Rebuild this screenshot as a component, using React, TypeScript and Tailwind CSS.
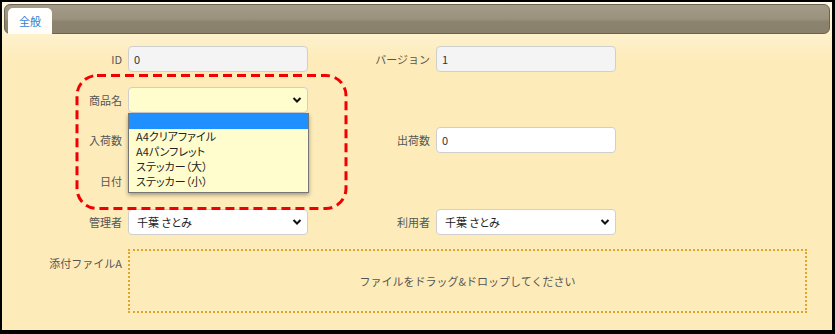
import React from "react";

const font = { fontFamily: '"Noto Sans CJK JP", "Noto Sans", sans-serif' };
const palt = { fontFeatureSettings: '"palt"' };

const Chevron = () => (
  <svg width="10" height="7" viewBox="0 0 10 7" className="absolute right-[5px] top-1/2 -translate-y-1/2">
    <path d="M1.5 1.5 L5 5 L8.5 1.5" fill="none" stroke="#111" strokeWidth="2" />
  </svg>
);

const Label = ({ text, w }: { text: string; w: string }) => (
  <div className={`${w} shrink-0 text-right text-[11px] leading-none text-[#555]`}>{text}</div>
);

const TextBox = ({ value, readOnly }: { value: string; readOnly?: boolean }) => (
  <div
    className={`ml-[6px] flex h-[26px] w-[180px] items-center rounded-[4px] border border-[#cfcfcf] px-[5px] text-[11px] text-[#333] ${
      readOnly ? "bg-[#f4f4f4]" : "bg-white"
    }`}
  >
    {value}
  </div>
);

const SelectBox = ({ value, yellow }: { value: string; yellow?: boolean }) => (
  <div
    style={palt}
    className={`relative ml-[6px] flex h-[26px] w-[180px] items-center rounded-[4px] border border-[#cfcfcf] px-[8px] text-[11px] text-[#222] ${
      yellow ? "bg-[#fffdcd]" : "bg-white"
    }`}
  >
    {value}
    <Chevron />
  </div>
);

const Blank = () => <div className="ml-[6px] h-[26px] w-[180px]" />;

export default function App() {
  const options = ["A4クリアファイル", "A4パンフレット", "ステッカー（大）", "ステッカー（小）"];
  return (
    <div style={font} className="h-[334px] w-[835px] bg-black pb-[4px] pl-[2px] pr-[3px] pt-[2px]">
      <div className="flex h-full flex-col bg-[linear-gradient(to_bottom,#fff8e4,#fdebb9_60px)] p-[2px] pb-0">
        {/* tab header */}
        <div className="flex h-[30px] shrink-0 items-end rounded-[6px] border border-[#6a6352] bg-[linear-gradient(to_bottom,#a39b87,#9a927d_50%,#8b836e_60%,#89816c)] pl-[3px]">
          <div className="-mb-px flex h-[26px] w-[44px] items-center justify-center rounded-t-[5px] bg-[linear-gradient(to_bottom,#ffffff,#fffdf6)] text-[11px] text-[#2f7fd4]">
            全般
          </div>
        </div>

        {/* body */}
        <div className="relative flex-1 pt-[12px]">
          <div className="flex h-[26px] items-center">
            <Label text="ID" w="w-[118px]" />
            <TextBox value="0" readOnly />
            <Label text="バージョン" w="w-[122px]" />
            <TextBox value="1" readOnly />
          </div>
          <div className="mt-[15px] flex h-[26px] items-center">
            <Label text="商品名" w="w-[118px]" />
            <SelectBox value="" yellow />
          </div>
          <div className="mt-[14px] flex h-[26px] items-center">
            <Label text="入荷数" w="w-[118px]" />
            <Blank />
            <Label text="出荷数" w="w-[122px]" />
            <TextBox value="0" />
          </div>
          <div className="mt-[15px] flex h-[26px] items-center">
            <Label text="日付" w="w-[118px]" />
            <Blank />
          </div>
          <div className="mt-[15px] flex h-[26px] items-center">
            <Label text="管理者" w="w-[118px]" />
            <SelectBox value="千葉 さとみ" />
            <Label text="利用者" w="w-[122px]" />
            <SelectBox value="千葉 さとみ" />
          </div>
          <div className="mt-[14px] flex items-start">
            <div className="w-[118px] shrink-0 pt-[9px] text-right text-[11px] leading-none text-[#555]">添付ファイルA</div>
            <div className="ml-[6px] flex h-[64px] w-[679px] items-center justify-center border-2 border-dotted border-[#e0a52c] text-[11px] text-[#555]">
              ファイルをドラッグ&ドロップしてください
            </div>
          </div>

          {/* open dropdown list */}
          <div
            style={palt}
            className="absolute left-[124px] top-[79px] w-[181px] border border-[#767676] bg-[#fffdcd] pb-[3px] text-[11px] leading-[15px] text-[#222] shadow-[0_2px_4px_rgba(0,0,0,0.35)]"
          >
            <div className="h-[15px] bg-[#1e90ff]" />
            {options.map((o) => (
              <div key={o} className="h-[15px] px-[7px]">
                {o}
              </div>
            ))}
          </div>

          {/* annotation */}
          <svg className="pointer-events-none absolute left-[71px] top-[40px]" width="273" height="137">
            <rect x="2" y="1.5" width="269" height="133" rx="20" fill="none" stroke="#f00000" strokeWidth="3" strokeDasharray="9 5" />
          </svg>
        </div>
      </div>
    </div>
  );
}
